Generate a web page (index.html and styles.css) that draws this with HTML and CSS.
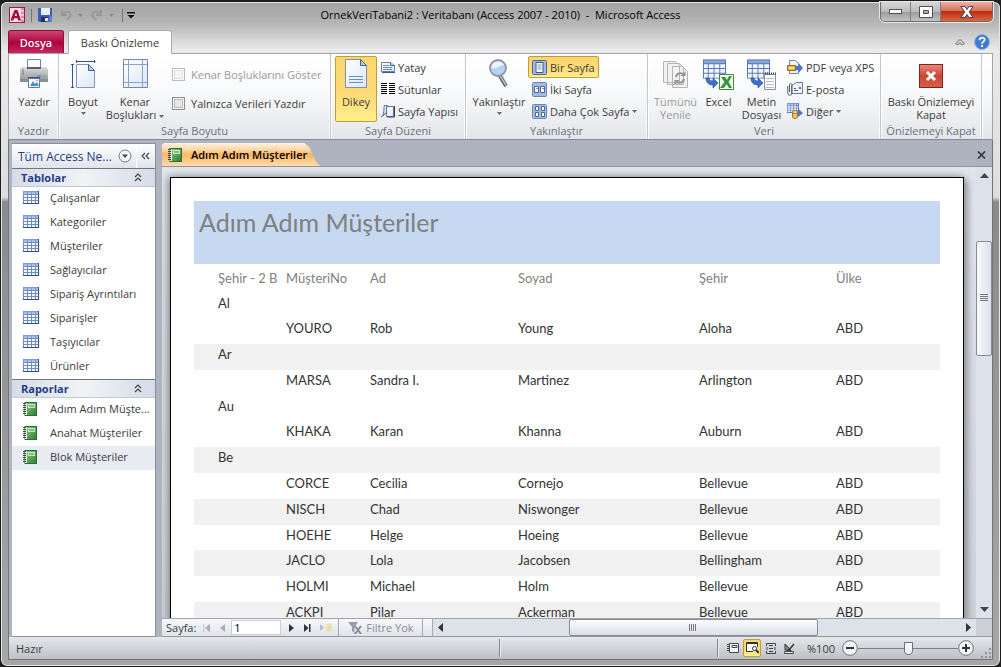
FILE: index.html
```html
<!DOCTYPE html>
<html lang="tr">
<head>
<meta charset="utf-8">
<title>OrnekVeriTabani2 : Veritabanı (Access 2007 - 2010) - Microsoft Access</title>
<link rel="stylesheet" href="styles.css">
</head>
<body>
<svg class="defs" aria-hidden="true">
  <defs>
    <linearGradient id="paper" x1="0" y1="0" x2="1" y2="1"><stop offset="0" stop-color="#fff"/><stop offset="1" stop-color="#dbe7f6"/></linearGradient>
    <linearGradient id="green" x1="0" y1="0" x2="1" y2="1"><stop offset="0" stop-color="#8fce87"/><stop offset="1" stop-color="#2c7c36"/></linearGradient>
    <linearGradient id="red" x1="0" y1="0" x2="0" y2="1"><stop offset="0" stop-color="#e88c7f"/><stop offset=".5" stop-color="#cc4434"/><stop offset="1" stop-color="#d5604c"/></linearGradient>
    <linearGradient id="grey" x1="0" y1="0" x2="0" y2="1"><stop offset="0" stop-color="#dcdcdc"/><stop offset="1" stop-color="#8d9094"/></linearGradient>
  </defs>
  <symbol id="table" viewBox="0 0 16 13">
    <rect width="16" height="13" fill="#6f8cc2"/><rect x="0" y="0" width="16" height="3" fill="#7f9dd2"/><path d="M0 12h16v1H0zM15 0h1v13h-1z" fill="#2f4f90"/>
    <path d="M1 1h3v2H1zM5 1h3v2H5zM9 1h3v2H9zM13 1h2v2h-2z" fill="#a9c0e8"/>
    <path d="M1 4h3v2H1zM5 4h3v2H5zM9 4h3v2H9zM13 4h2v2h-2zM1 7h3v2H1zM5 7h3v2H5zM9 7h3v2H9zM13 7h2v2h-2zM1 10h3v2H1zM5 10h3v2H5zM9 10h3v2H9zM13 10h2v2h-2z" fill="#f3f7fe"/>
  </symbol>
  <symbol id="report" viewBox="0 0 14 14">
    <rect x="2" y=".5" width="11.5" height="13" fill="url(#green)" stroke="#2d6c35"/><rect x="2" y="1" width="2" height="12" fill="#d9eed6"/>
    <path d="M0 1.500h3M0 3.500h3M0 5.500h3M0 7.500h3M0 9.500h3M0 11.500h3" stroke="#444"/>
    <rect x="5.500" y="2.500" width="6" height="3" fill="#7dc479" stroke="#c5e8c0"/>
  </symbol>
  <symbol id="grid" viewBox="0 0 24 20">
    <path d="M0 0h24v20H0z" fill="#5677b5"/><path d="M1 1h22v3H1z" fill="#88a5d8"/>
    <path d="M1 5h4v4H1zM6 5h5v4H6zM12 5h5v4h-5zM18 5h5v4h-5zM1 10h4v4H1zM6 10h5v4H6zM12 10h5v4h-5zM18 10h5v4h-5zM1 15h4v4H1zM6 15h5v4H6zM12 15h5v4h-5zM18 15h5v4h-5z" fill="#f3f7fd"/>
  </symbol>
  <symbol id="page" viewBox="0 0 22 29">
    <path d="M.5.500h15l6 6v22H.5z" fill="url(#paper)" stroke="#7b8fb4"/><path d="M15.500.500v6h6z" fill="#b8cdec" stroke="#40619c"/>
  </symbol>
  <symbol id="chev" viewBox="0 0 8 9"><path d="M1 4l3-3 3 3M1 8l3-3 3 3" fill="none" stroke="#444" stroke-width="1.200"/></symbol>
  <symbol id="down" viewBox="0 0 5 3"><path d="M0 0h5L2.500 3z" fill="currentColor"/></symbol>
</svg>

<div class="window">
  <header class="titlebar">
    <div class="quick">
      <svg class="logo" width="16" height="16" viewBox="0 0 16 16"><rect x=".5" y=".5" width="15" height="15" fill="#f9e3ea" stroke="#a8154d"/><path d="M12 1h3v14h-3z" fill="#e18ba9"/><path d="M12 4h3M12 8h3M12 12h3" stroke="#fff"/><path d="M1.500 13.500L5.500 3h3L12 13.500H9.300l-.7-2.300H5l-.8 2.300zM5.700 9h2.300L7 5.500z" fill="#a1053d"/></svg>
      <i class="vline"></i>
      <button class="bare" aria-label="Kaydet"><svg width="14" height="14" viewBox="0 0 14 14"><path d="M0 0h14v14H1L0 13z" fill="#4158b8"/><path d="M3 0h9v7H3z" fill="#e9effa"/><path d="M3 9h8v5H3z" fill="#23305f"/><path d="M7 10h3v3H7z" fill="#f4f4f4"/><path d="M12 7l2 2v5H8z" fill="#7f9be6" opacity=".5"/></svg></button>
      <button class="bare undo" aria-label="Geri Al" disabled><svg width="12" height="12" viewBox="0 0 12 12"><path d="M2 1v5h5M2 6C5 1 11 2 10.500 6.500 10 9 8 10 6.500 11" fill="none" stroke="#989898" stroke-width="2"/></svg></button>
      <svg class="dim" width="5" height="3"><use href="#down"/></svg>
      <button class="bare redo" aria-label="Yinele" disabled><svg width="12" height="12" viewBox="0 0 12 12"><path d="M10 1v5H5M10 6C7 1 1 2 1.500 6.500 2 9 4 10 5.500 11" fill="none" stroke="#989898" stroke-width="2"/></svg></button>
      <svg class="dim" width="5" height="3"><use href="#down"/></svg>
      <i class="vline last"></i>
      <button class="bare" aria-label="Hızlı Erişim"><svg width="8" height="7" viewBox="0 0 8 7"><path d="M0 0h8v1.500H0zM.5 3h7L4 6.500z" fill="#111"/></svg></button>
    </div>
    <h1>OrnekVeriTabani2 : Veritabanı (Access 2007 - 2010)&nbsp; - &nbsp;Microsoft Access</h1>
    <div class="winbtns">
      <button aria-label="Simge durumu"><svg width="14" height="6" viewBox="0 0 14 6"><rect x=".5" y=".5" width="12" height="4" fill="#fff" stroke="#4c5058"/></svg></button>
      <button aria-label="Ekranı kapla"><svg width="14" height="12" viewBox="0 0 14 12"><path fill-rule="evenodd" d="M.5.500h13v11H.5zM4.500 4.500v3h5v-3z" fill="#fff" stroke="#4c5058"/></svg></button>
      <button class="close" aria-label="Kapat"><svg width="14" height="12" viewBox="0 0 14 12"><path d="M1 .5h4l2 3 2-3h4L9.300 6l3.700 5.500H9l-2-3-2 3H1L4.700 6z" fill="#fff" stroke="#4c3a44"/></svg></button>
    </div>
  </header>

  <nav class="tabs">
    <button class="file">Dosya</button>
    <button class="tab">Baskı Önizleme</button>
    <button class="bare collapse" aria-label="Şeridi Simge Durumuna Küçült"><svg width="10" height="8" viewBox="0 0 10 8"><path d="M1 5.500L5 1.500l4 4L7.500 7 5 4.500 2.500 7z" fill="#fff" stroke="#3c3c3c"/></svg></button>
    <button class="bare" aria-label="Yardım"><svg width="16" height="16" viewBox="0 0 16 16"><circle cx="8" cy="8" r="7.500" fill="#3d7bd0" stroke="#8db5e8"/><path d="M5.500 6.200c0-3.600 5.200-3.300 5.200-.4C10.700 7.600 8 7.700 8 9.800" fill="none" stroke="#fff" stroke-width="1.800"/><path d="M7 11h2v2H7z" fill="#fff"/></svg></button>
  </nav>

  <section class="ribbon">
    <div class="group g-print">
      <div class="tools">
        <button class="big"><svg width="28" height="30" viewBox="0 0 28 30"><path d="M7.500.500h13v10h-13z" fill="#f8fbff" stroke="#6f83a6"/><path d="M2 8h24l2 2v12l-1 1H1l-1-1V10z" fill="url(#grey)"/><path d="M0 20h28v3H0z" fill="#8b8f94"/><path d="M7 8h14v2H7z" fill="#5b5f66"/><path d="M2 11h2M2 13h2M2 15h2" stroke="#777"/><path d="M8 18h12v2H8z" fill="#4e535b"/><path d="M8.500 19.500h11v9h-11z" fill="#fff" stroke="#5577b5"/><path d="M10 27l3-5 2 3 2-2 2 4z" fill="#4f8bd3"/><circle cx="17" cy="21.500" r="1" fill="#e5a13c"/><path d="M17 17h4" stroke="#4a78cf"/><path d="M22 17h3" stroke="#5dc04e"/></svg><span>Yazdır</span></button>
      </div><h2>Yazdır</h2>
    </div>
    <div class="group g-size">
      <div class="tools">
        <button class="big"><svg width="25" height="30" viewBox="0 0 25 30"><path d="M5.500 2.500h19M5.500 1v3M23.500 1v3M1.500 5.500v23M0 5.500h3M0 28.500h3" stroke="#31519c" fill="none"/><path d="M5.500 5.500h12l6 6v17h-18z" fill="url(#paper)" stroke="#8497b9"/><path d="M17.500 5.500v6h6z" fill="#b8cdec" stroke="#40619c"/></svg><span>Boyut</span><svg class="drop" width="5" height="3"><use href="#down"/></svg></button>
        <button class="big wide"><svg width="25" height="30" viewBox="0 0 25 30"><path d="M.5.500h24v28H.5z" fill="url(#paper)" stroke="#7088b3"/><path d="M5.500 1v27M19.500 1v27M1 5.500h23M1 23.500h23" stroke="#8aa3cd"/></svg><span>Kenar<br>Boşlukları <svg width="5" height="3"><use href="#down"/></svg></span></button>
        <div class="checks">
          <label class="off"><input type="checkbox" disabled>Kenar Boşluklarını Göster</label>
          <label><input type="checkbox">Yalnızca Verileri Yazdır</label>
        </div>
      </div><h2>Sayfa Boyutu</h2>
    </div>
    <div class="group g-layout">
      <div class="tools">
        <button class="big on"><svg width="22" height="30" viewBox="0 0 22 30"><use href="#page" width="22" height="29"/><path d="M4 17.500h14M4 20.500h14M4 23.500h14" stroke="#6d8cc0"/></svg><span>Dikey</span></button>
        <div class="smalls">
          <button class="small"><svg width="14" height="14" viewBox="0 0 14 14"><path d="M.5 2.500h9l4 3v6H.5z" fill="url(#paper)" stroke="#6580b0"/><path d="M9.500 2.500v3h4" fill="#b8cdec" stroke="#40619c"/><path d="M2 5.500h6M2 7.500h9M2 9.500h9" stroke="#6d8cc0"/><path d="M1 12.500h13" stroke="#3d5688"/></svg>Yatay</button>
          <button class="small"><svg width="14" height="14" viewBox="0 0 14 14"><path d="M0 1.500h6M0 3.500h6M0 5.500h6M0 7.500h6M0 9.500h6M0 11.500h6M8 1.500h6M8 3.500h6M8 5.500h6M8 7.500h6M8 9.500h6M8 11.500h6" stroke="#000"/></svg>Sütunlar</button>
          <button class="small"><svg width="14" height="14" viewBox="0 0 14 14"><path d="M1.500 12c2-3 1-9 2-10.500h3V9" fill="#dfe5ee" stroke="#5f6d86"/><path d="M5.500 2.500h7v10h-7z" fill="url(#paper)" stroke="#5d76a8"/><path d="M13.500 2v11H6" stroke="#33415f" fill="none"/><path d="M0 13l5-4" stroke="#555"/></svg>Sayfa Yapısı</button>
        </div>
      </div><h2>Sayfa Düzeni</h2>
    </div>
    <div class="group g-zoom">
      <div class="tools">
        <button class="big wide"><svg width="22" height="30" viewBox="0 0 22 30"><path d="M12 17l6 10" stroke="#62666e" stroke-width="4"/><path d="M12 17l6 9" stroke="#b9bdc4" stroke-width="1.500"/><circle cx="10" cy="9" r="8" fill="#b5d2f2" stroke="#8d949f" stroke-width="1.800"/><path d="M3 9a7 7 0 0 1 13-3C12 6 9 11 3 9z" fill="#eaf4ff"/></svg><span>Yakınlaştır</span><svg class="drop" width="5" height="3"><use href="#down"/></svg></button>
        <div class="smalls">
          <button class="small on"><svg width="15" height="15" viewBox="0 0 15 15"><rect x=".5" y=".5" width="14" height="14" rx="1" fill="#a3bbdf" stroke="#4b6695"/><path d="M4 2.500h7v10H4z" fill="#fff" stroke="#3d5688"/><path d="M5.500 5h4M5.500 7h4M5.500 9h4" stroke="#7890b8"/></svg>Bir Sayfa</button>
          <button class="small"><svg width="15" height="15" viewBox="0 0 15 15"><rect x=".5" y=".5" width="14" height="14" rx="1" fill="#a3bbdf" stroke="#6a86b5"/><path d="M2.500 4.500h4v6h-4zM8.500 4.500h4v6h-4z" fill="#fff" stroke="#4b6695"/><path d="M4 6.500h2M10 6.500h2" stroke="#7890b8"/></svg>İki Sayfa</button>
          <button class="small"><svg width="15" height="15" viewBox="0 0 15 15"><rect x=".5" y=".5" width="14" height="14" rx="1" fill="#a3bbdf" stroke="#6a86b5"/><path d="M3.500 2.500h3v4h-3zM9.500 2.500h3v4h-3zM3.500 8.500h3v4h-3zM9.500 8.500h3v4h-3z" fill="#fff" stroke="#4b6695"/></svg>Daha Çok Sayfa <svg width="5" height="3"><use href="#down"/></svg></button>
        </div>
      </div><h2>Yakınlaştır</h2>
    </div>
    <div class="group g-data">
      <div class="tools">
        <button class="big off" disabled><svg width="26" height="30" viewBox="0 0 26 30"><path d="M.5 2.500h12l4 4v17H.5zM4.500 4.500h12l4 4v17h-16zM9.500 7.500h10l5 5v16h-15z" fill="#f2f2f2" stroke="#b4b4b4"/><path d="M13 18a4.500 4.500 0 0 1 8-2M21 20a4.500 4.500 0 0 1-8 2" fill="none" stroke="#949494" stroke-width="2"/><path d="M22.500 12v5h-5zM11.500 26v-5h5z" fill="#949494"/></svg><span>Tümünü<br>Yenile</span></button>
        <button class="big"><svg width="32" height="32" viewBox="0 0 32 32"><use href="#grid" width="23" height="20"/><path d="M3 19c0 6 4 7 7 7v3l5-5-5-5v3c-2 0-4-1-4-3z" fill="#3f6fd0" stroke="#284c9c" stroke-width=".6"/><path d="M16.500 15.500h14v15h-14z" fill="#f2fbef" stroke="#3d8b40"/><path d="M18 18h4l2 3 2-4h3l-3.500 6 3.500 6h-3l-2.500-4-2.500 4h-4l4.500-6z" fill="#35913a"/></svg><span>Excel</span></button>
        <button class="big"><svg width="30" height="32" viewBox="0 0 30 32"><use href="#grid" width="23" height="20"/><path d="M4 19c0 6 4 7 7 7v3l5-5-5-5v3c-2 0-4-1-4-3z" fill="#3f6fd0" stroke="#284c9c" stroke-width=".6"/><path d="M17.500 15.500h11v15h-11z" fill="#fff" stroke="#8a8f99"/><path d="M18 14.500h11" stroke="#444" stroke-dasharray="1 1" stroke-width="2"/><path d="M19 19.500h8M19 22.500h8M19 25.500h8M19 28.500h8" stroke="#b3bac8"/></svg><span>Metin<br>Dosyası</span></button>
        <div class="smalls">
          <button class="small"><svg width="16" height="16" viewBox="0 0 16 16"><path d="M2.500 1.500h6l3 3v10h-9z" fill="url(#paper)" stroke="#6f83a6"/><path d="M.5 6.500h8v5h-8z" fill="#e9b93f" stroke="#9b6b12"/><path d="M2 9h5" stroke="#fff"/><path d="M9 7h3V4.500L16 9l-4 4.500V11H9z" fill="#4577d2"/></svg>PDF veya XPS</button>
          <button class="small"><svg width="16" height="16" viewBox="0 0 16 16"><path d="M4.500 4.500l5-3h6v11h-11z" fill="#edf3fb" stroke="#66799e"/><path d="M7 9.500h4M7 7.500h2" stroke="#3d5fa5"/><path d="M12 6h2v2h-2z" fill="#d04a35"/><path d="M.8 5v7c0 3 4.200 3 4.200 0V4c0-2-2.500-2-2.500 0v7" fill="none" stroke="#555c69"/></svg>E-posta</button>
          <button class="small"><svg width="16" height="16" viewBox="0 0 16 16"><use href="#table" width="12" height="10"/><path d="M8 8h3V5.500l5 4.500-5 4V12H8z" fill="#4577d2"/><path d="M5.500 9v5c0 2 5 2 5 0V9z" fill="#eec15f" stroke="#a97523"/><ellipse cx="8" cy="9" rx="2.500" ry="1.500" fill="#fbe3a8" stroke="#a97523"/></svg>Diğer <svg width="5" height="3"><use href="#down"/></svg></button>
        </div>
      </div><h2>Veri</h2>
    </div>
    <div class="group g-close">
      <div class="tools">
        <button class="big wide"><svg width="24" height="30" viewBox="0 0 24 30"><rect x=".5" y="5.500" width="23" height="23" fill="url(#red)" stroke="#7e2419"/><path d="M8 13l8 8M16 13l-8 8" stroke="#fff" stroke-width="3"/></svg><span>Baskı Önizlemeyi<br>Kapat</span></button>
      </div><h2>Önizlemeyi Kapat</h2>
    </div>
  </section>

  <main class="work">
    <aside class="side">
      <div class="side-head"><span>Tüm Access Ne...</span>
        <button class="bare" aria-label="Gezinti seçenekleri"><svg width="14" height="14" viewBox="0 0 14 14"><circle cx="7" cy="7" r="6" fill="#f4f5f7" stroke="#777c86"/><path d="M4 5.500h6L7 9z" fill="#444"/></svg></button>
        <i></i>
        <button class="bare fold" aria-label="Gezinti bölmesini kapat"><svg width="9" height="8" viewBox="0 0 9 8"><path d="M4 1L1 4l3 3M8 1L5 4l3 3" fill="none" stroke="#444" stroke-width="1.200"/></svg></button>
      </div>
      <h3>Tablolar<svg width="8" height="9"><use href="#chev"/></svg></h3>
      <ul>
        <li><a href="#t1"><svg width="16" height="13"><use href="#table"/></svg>Çalışanlar</a></li>
        <li><a href="#t2"><svg width="16" height="13"><use href="#table"/></svg>Kategoriler</a></li>
        <li><a href="#t3"><svg width="16" height="13"><use href="#table"/></svg>Müşteriler</a></li>
        <li><a href="#t4"><svg width="16" height="13"><use href="#table"/></svg>Sağlayıcılar</a></li>
        <li><a href="#t5"><svg width="16" height="13"><use href="#table"/></svg>Sipariş Ayrıntıları</a></li>
        <li><a href="#t6"><svg width="16" height="13"><use href="#table"/></svg>Siparişler</a></li>
        <li><a href="#t7"><svg width="16" height="13"><use href="#table"/></svg>Taşıyıcılar</a></li>
        <li><a href="#t8"><svg width="16" height="13"><use href="#table"/></svg>Ürünler</a></li>
      </ul>
      <h3>Raporlar<svg width="8" height="9"><use href="#chev"/></svg></h3>
      <ul>
        <li><a href="#r1"><svg width="16" height="14"><use href="#report" width="14"/></svg>Adım Adım Müşte...</a></li>
        <li><a href="#r2"><svg width="16" height="14"><use href="#report" width="14"/></svg>Anahat Müşteriler</a></li>
        <li><a href="#r3" class="hot"><svg width="16" height="14"><use href="#report" width="14"/></svg>Blok Müşteriler</a></li>
      </ul>
    </aside>

    <section class="doc">
      <div class="doc-tabs">
        <button class="doc-tab"><svg width="14" height="14"><use href="#report"/></svg>Adım Adım Müşteriler</button>
        <button class="bare doc-close" aria-label="Kapat"><svg width="9" height="8" viewBox="0 0 9 8"><path d="M1 .5l7 7M8 .5l-7 7" stroke="#333" stroke-width="1.600"/></svg></button>
      </div>
      <div class="view">
        <div class="canvas">
          <article class="sheet">
            <h2>Adım Adım Müşteriler</h2>
            <table>
              <colgroup><col class="c0"><col class="c1"><col class="c2"><col class="c3"><col class="c4"><col class="c5"></colgroup>
              <thead><tr><th>Şehir - 2 B</th><th>MüşteriNo</th><th>Ad</th><th>Soyad</th><th>Şehir</th><th>Ülke</th></tr></thead>
              <tbody>
                <tr class="lead"><td colspan="6">Al</td></tr>
                <tr><td></td><td>YOURO</td><td>Rob</td><td>Young</td><td>Aloha</td><td>ABD</td></tr>
                <tr class="band"><td colspan="6">Ar</td></tr>
                <tr><td></td><td>MARSA</td><td>Sandra I.</td><td>Martinez</td><td>Arlington</td><td>ABD</td></tr>
                <tr class="lead"><td colspan="6">Au</td></tr>
                <tr><td></td><td>KHAKA</td><td>Karan</td><td>Khanna</td><td>Auburn</td><td>ABD</td></tr>
                <tr class="band"><td colspan="6">Be</td></tr>
                <tr><td></td><td>CORCE</td><td>Cecilia</td><td>Cornejo</td><td>Bellevue</td><td>ABD</td></tr>
                <tr class="band"><td></td><td>NISCH</td><td>Chad</td><td>Niswonger</td><td>Bellevue</td><td>ABD</td></tr>
                <tr class="lead"><td></td><td>HOEHE</td><td>Helge</td><td>Hoeing</td><td>Bellevue</td><td>ABD</td></tr>
                <tr class="band"><td></td><td>JACLO</td><td>Lola</td><td>Jacobsen</td><td>Bellingham</td><td>ABD</td></tr>
                <tr><td></td><td>HOLMI</td><td>Michael</td><td>Holm</td><td>Bellevue</td><td>ABD</td></tr>
                <tr class="band"><td></td><td>ACKPI</td><td>Pilar</td><td>Ackerman</td><td>Bellevue</td><td>ABD</td></tr>
              </tbody>
            </table>
          </article>
        </div>
        <div class="vbar">
          <button class="bare" aria-label="Yukarı"><svg width="9" height="5" viewBox="0 0 9 5"><path d="M0 5l4.500-5L9 5z" fill="#444"/></svg></button>
          <div class="vtrack"><div class="vthumb"><svg width="8" height="8" viewBox="0 0 8 8"><path d="M0 .5h8M0 2.500h8M0 4.500h8M0 6.500h8" stroke="#777"/></svg></div></div>
          <button class="bare" aria-label="Aşağı"><svg width="9" height="5" viewBox="0 0 9 5"><path d="M0 0l4.500 5L9 0z" fill="#444"/></svg></button>
        </div>
      </div>
      <div class="pager">
        <label for="pg">Sayfa:</label>
        <button class="bare" aria-label="İlk" disabled><svg width="7" height="8" viewBox="0 0 7 8"><path d="M.7 0v8M7 0v8L2.500 4z" fill="#a9adb4" stroke="#a9adb4" stroke-width=".6"/></svg></button>
        <button class="bare" aria-label="Önceki" disabled><svg width="5" height="8" viewBox="0 0 5 8"><path d="M5 0v8L0 4z" fill="#a9adb4"/></svg></button>
        <input id="pg" type="text" value="1">
        <button class="bare" aria-label="Sonraki"><svg width="5" height="8" viewBox="0 0 5 8"><path d="M0 0v8l5-4z" fill="#333"/></svg></button>
        <button class="bare" aria-label="Son"><svg width="7" height="8" viewBox="0 0 7 8"><path d="M0 0v8l4.500-4zM5 0h1.500v8H5z" fill="#333"/></svg></button>
        <button class="bare new" aria-label="Yeni" disabled><svg width="13" height="9" viewBox="0 0 13 9"><path d="M0 1v7l4-3.500z" fill="#b9bcc2"/><path d="M9 0v9M5 4.500h8M6 1l6 7M12 1L6 8" stroke="#eadf9c" stroke-width="1.200"/></svg></button>
        <button class="filter" disabled><svg width="14" height="12" viewBox="0 0 14 12"><path d="M0 0h10L6.500 5v6L4 9V5z" fill="#9a9da3"/><path d="M7 4l6 8M13 4l-6 8" stroke="#85888e" stroke-width="1.800"/></svg>Filtre Yok</button>
        <span class="gap"></span>
        <div class="hbar">
          <button class="bare" aria-label="Sola"><svg width="5" height="9" viewBox="0 0 5 9"><path d="M5 0v9L0 4.500z" fill="#333"/></svg></button>
          <div class="htrack"><div class="hthumb"><svg width="8" height="7" viewBox="0 0 8 7"><path d="M.5 0v7M2.500 0v7M4.500 0v7M6.500 0v7" stroke="#777"/></svg></div></div>
          <button class="bare" aria-label="Sağa"><svg width="5" height="9" viewBox="0 0 5 9"><path d="M0 0v9l5-4.500z" fill="#333"/></svg></button>
        </div>
        <span class="corner"></span>
      </div>
    </section>
  </main>

  <footer class="status">
    <span class="ready">Hazır</span><i class="vsep"></i>
    <span class="fill"></span><i class="vsep"></i>
    <div class="modes">
      <button class="mode" aria-label="Rapor Görünümü"><svg width="12" height="10" viewBox="0 0 12 10"><path d="M2.500.500h9v9h-9z" fill="#f5f5f5" stroke="#444"/><path d="M0 1.500h3M0 3.500h3M0 5.500h3M0 7.500h3" stroke="#444"/><path d="M5 2.500h5v2H5z" fill="#fff" stroke="#444"/></svg></button>
      <button class="mode on" aria-label="Baskı Önizleme"><svg width="13" height="12" viewBox="0 0 13 12"><path d="M7 9.500H.5v-9h11V5" fill="#fff" stroke="#333"/><path d="M1 1.500h10" stroke="#333"/><circle cx="8.500" cy="6.500" r="2" fill="#fff" stroke="#333"/><path d="M10 8l3 3" stroke="#333" stroke-width="2"/></svg></button>
      <button class="mode" aria-label="Düzen Görünümü"><svg width="10" height="11" viewBox="0 0 10 11"><path d="M.5 3V.500h9V3M.5 8v2.500h9V8M1 4v3M9 4v3" fill="none" stroke="#444"/><path d="M3 2.500h4M3 5.500h4M3 8.500h4" stroke="#444"/></svg></button>
      <button class="mode" aria-label="Tasarım Görünümü"><svg width="12" height="11" viewBox="0 0 12 11"><path d="M1 1v6l6 .5z" fill="#888" stroke="#333"/><path d="M4 8L10 1" stroke="#333" stroke-width="1.500"/><path d="M.5 8.500h9v2h-9z" fill="#fff" stroke="#444"/></svg></button>
    </div>
    <output>%100</output>
    <button class="bare" aria-label="Uzaklaştır"><svg width="16" height="16" viewBox="0 0 16 16"><circle cx="8" cy="8" r="7.300" fill="#f6f7f8" stroke="#6c7079"/><path d="M4 8h8" stroke="#333" stroke-width="2"/></svg></button>
    <input class="zoom" type="range" aria-label="Yakınlaştırma" min="0" max="100" value="50">
    <button class="bare" aria-label="Yakınlaştır"><svg width="16" height="16" viewBox="0 0 16 16"><circle cx="8" cy="8" r="7.300" fill="#f6f7f8" stroke="#6c7079"/><path d="M4 8h8M8 4v8" stroke="#333" stroke-width="2"/></svg></button>
    <svg class="grip" width="12" height="12" viewBox="0 0 12 12"><path d="M9 1h2v2H9zM5 5h2v2H5zM9 5h2v2H9zM1 9h2v2H1zM5 9h2v2H5zM9 9h2v2H9z" fill="#8e939b"/></svg>
  </footer>
</div>
</body>
</html>
```

FILE: styles.css
```css
* { box-sizing: border-box; }
html, body { height: 100%; margin: 0; }
body {
  background: #222;
  font: 11px/13px "Open Sans", "Noto Sans", sans-serif;
  color: #3b3b3b;
  overflow: hidden;
}
h1, h2, h3, ul { margin: 0; padding: 0; font-weight: normal; list-style: none; }
button, input { font: inherit; color: inherit; margin: 0; padding: 0; }
button { background: none; border: 1px solid transparent; white-space: nowrap; }
svg { flex: none; }
.defs { position: absolute; width: 0; height: 0; }
.bare { border: 0; display: flex; align-items: center; justify-content: center; }

.window {
  height: 100%;
  display: flex;
  flex-direction: column;
  padding: 0 7px 6px;
  border: 1px solid #1c1c1c;
  border-top-width: 2px;
  border-radius: 7px;
  box-shadow: inset 0 0 0 1px #e6e6e6;
  background: linear-gradient(#a2a2a2, #b4b4b4 20px, #eaeaea 48px, #dcdcdc 195px, #8b8b8b 200px, #a7a7a7);
}

/* title bar */
.titlebar { flex: none; height: 28px; display: flex; }
.quick { display: flex; align-items: center; gap: 8px; height: 26px; padding-left: 1px; }
.vline { width: 1px; height: 13px; background: #777; margin: 0 -2px; }
.vline.last { margin: 0 -4px 0 0; }
.undo, .redo { margin-right: -2px; }
.dim { color: #888; }
h1 {
  flex: 1;
  text-align: center;
  font-size: 11px;
  line-height: 26px;
  color: #000;
  padding-right: 14px;
}
.winbtns {
  display: flex;
  height: 20px;
  border: 1px solid #6b6b6b;
  border-top: 0;
  border-radius: 0 0 5px 5px;
  overflow: hidden;
  box-shadow: 0 0 0 1px #e8e8e8;
}
.winbtns button {
  width: 30px;
  display: flex;
  align-items: center;
  justify-content: center;
  border: 0;
  border-right: 1px solid #808080;
  background: linear-gradient(#d6d6d6, #bcbcbc 50%, #9a9a9a 51%, #c2c2c2);
}
.winbtns .close { width: 51px; border: 0; background: linear-gradient(#eab2a5, #d9735e 45%, #bd2f12 50%, #d9653f); }

/* ribbon tabs */
.tabs { flex: none; display: flex; height: 23px; align-items: flex-end; padding-right: 3px; gap: 8px; }
.file {
  width: 56px;
  height: 23px;
  color: #fff;
  font-weight: 600;
  border: 1px solid #8f0c3c;
  border-bottom: 0;
  border-radius: 3px 3px 0 0;
  background: linear-gradient(#c94674, #b20e48 45%, #a8003c 50%, #c9265e);
}
.tab {
  width: 104px;
  height: 24px;
  margin: 0 auto -1px -4px;
  position: relative;
  background: #fff;
  border: 1px solid #a9adb3;
  border-bottom: 0;
  border-radius: 3px 3px 0 0;
}
.tabs .bare { height: 23px; }
.collapse { margin-right: 1px; }

/* ribbon */
.ribbon {
  flex: none;
  display: flex;
  border: 1px solid #a0a5ac;
  border-bottom-color: #85898f;
  background: linear-gradient(#fff, #f8f9fa 45%, #e3e6ea);
}
.group {
  display: flex;
  flex-direction: column;
  padding-top: 2px;
  border-right: 1px solid #c4c8cd;
  box-shadow: inset -1px 0 #f9fafb, 1px 0 #fff;
}
.g-print { width: 50px; }
.g-size { width: 272px; }
.g-layout { width: 135px; }
.g-zoom { width: 182px; }
.g-data { width: 233px; }
.g-close { width: 101px; }
.tools { display: flex; height: 66px; padding: 0 4px; }
.g-size .tools { padding-left: 3px; }
.g-close .tools { justify-content: center; }
.group h2 { font-size: 11px; line-height: 17px; text-align: center; color: #6a6f7a; }
.big {
  min-width: 42px;
  display: flex;
  flex-direction: column;
  align-items: center;
  padding-top: 2px;
  border-radius: 2px;
}
.big > svg:first-child { margin-bottom: 6px; }
.big > svg[height="32"] { margin-bottom: 4px; }
.big .drop { margin-top: 4px; }
.ribbon svg[width="5"] { color: #666; vertical-align: middle; }
.wide { min-width: 62px; }
.off { color: #9a9a9a; }
.on { border-color: #c59a3c; border-radius: 2px; background: linear-gradient(#fbd66b, #ffdb79 60%, #fff08c); }
.smalls { display: flex; flex-direction: column; align-items: flex-start; }
.small { height: 22px; display: flex; align-items: center; gap: 3px; padding: 0 3px; border-radius: 2px; }
.g-zoom .wide { min-width: 58px; }
.g-data .tools { padding-left: 6px; }
.g-data .big { min-width: 43px; }
.checks { display: flex; flex-direction: column; padding: 4px 0 0 6px; }
.checks label { display: flex; align-items: center; gap: 6px; height: 29px; white-space: nowrap; }
.checks input {
  appearance: none;
  width: 13px;
  height: 13px;
  border: 1px solid #8e8f8f;
  background: #e4e6e8;
  box-shadow: inset 0 0 0 1px #f4f4f4, inset 0 0 0 2px #b9bcc0;
}
.checks input:disabled { border-color: #b9bbbd; background: #f4f4f4; box-shadow: inset 0 0 0 1px #fff, inset 0 0 0 2px #ddd; }

/* work area */
.work { flex: 1; min-height: 0; display: flex; gap: 6px; padding: 3px 0 0 3px; border: 1px solid #6f747b; border-width: 0 1px; background: #adb4c0; }
.side { width: 144px; flex: none; background: #fff; border: 1px solid #8a909b; border-left: 0; }
.side-head {
  height: 25px;
  display: flex;
  align-items: center;
  gap: 2px;
  padding: 0 5px 0 6px;
  font-size: 12px;
  white-space: nowrap;
  color: #1f3d87;
  background: linear-gradient(#fff, #e0e4ea);
  border-bottom: 1px solid #70757d;
}
.side-head span { flex: 1; }
.side-head i { width: 1px; height: 24px; background: #fff; margin: 0 2px; }
h3 {
  height: 18px;
  display: flex;
  align-items: center;
  justify-content: space-between;
  padding: 0 13px 0 9px;
  font-size: 11px;
  font-weight: bold;
  color: #1f3d87;
  background: linear-gradient(90deg, #d5dbe8, #f1f3f5 50%, #d5dbe8);
  border-bottom: 1px solid #c3c9d2;
}
ul + h3 { height: 19px; border-top: 1px solid #70757d; }
.side a { display: flex; align-items: center; gap: 11px; height: 24px; padding: 0 0 3px 11px; color: inherit; text-decoration: none; white-space: nowrap; }
.side a.hot { background: #e8ebf1; }

.doc { flex: 1; min-width: 0; display: flex; flex-direction: column; }
.doc-tabs { flex: none; height: 24px; display: flex; justify-content: space-between; border-bottom: 1px solid #8d939d; padding-right: 6px; }
.doc-tab {
  display: flex;
  align-items: center;
  gap: 9px;
  height: 23px;
  padding: 0 13px 0 6px;
  font-weight: 600;
  color: #000;
  border: 0;
  border-radius: 3px 0 0 0;
  background: linear-gradient(#fff2e2, #fcd6a4 30%, #fcb660 50%, #fedcae);
  clip-path: polygon(0 0, calc(100% - 16px) 0, calc(100% - 11px) 4px, calc(100% - 4px) 19px, 100% 100%, 0 100%);
}
.view { flex: 1; min-height: 0; display: flex; background: #dfe3e9; }
.canvas { flex: 1; min-width: 0; padding: 10px 12px 0 8px; overflow: hidden; background: linear-gradient(#e2e6ec, #d0d4da); }
.sheet {
  min-height: 120%;
  padding: 23px;
  border: 1px solid #000;
  background: #fff;
  box-shadow: 3px 3px 8px #8a8e95, -2px 0 8px #8a8e95;
  font-family: Lato, sans-serif;
}
.sheet h2 { height: 63px; padding-left: 5px; margin-bottom: 4px; font-size: 25px; line-height: 42px; color: #7f7f7f; background: #c6d9f1; }
table { width: 100%; table-layout: fixed; border-collapse: collapse; font-size: 13px; line-height: 12px; }
.c0 { width: 92px; }
.c1 { width: 84px; }
.c2 { width: 148px; }
.c3 { width: 181px; }
.c4 { width: 137px; }
th, td { padding: 4px 0 0; height: 26px; text-align: left; vertical-align: top; font-weight: normal; white-space: nowrap; color: #333; }
th:first-child, td:first-child { padding-left: 24px; }
th { height: 25px; color: #7f7f7f; }
.lead td { height: 25px; }
.band { background: #f1f1f1; }

.vbar { width: 16px; display: flex; flex-direction: column; background: #dde2ea; }
.vbar .bare { height: 17px; }
.vtrack { flex: 1; display: flex; flex-direction: column; }
.vtrack::before { content: ""; flex: 57; }
.vtrack::after { content: ""; flex: 246; }
.vthumb { flex: 114; display: flex; align-items: center; justify-content: center; border: 1px solid #858c98; border-radius: 2px; background: linear-gradient(90deg, #fafbfc, #dbe0e8); }

.pager { flex: none; height: 19px; display: flex; align-items: stretch; border-top: 1px solid #9fa4ae; border-bottom: 1px solid #9196a0; background: linear-gradient(#f7f8fa, #dfe3e9); }
.pager label { line-height: 17px; padding: 0 2px 0 4px; }
.pager .bare { padding: 0 5px; }
.pager input { width: 50px; margin: 1px 3px 1px 1px; padding: 0 2px; border: 1px solid #c9cdd4; background: #fff; color: #000; }
.pager .new { padding: 0 5px 0 4px; }
.filter { display: flex; align-items: center; gap: 4px; padding: 0 8px 0 9px; color: #8a8d93; border: 1px solid #a4a9b2; border-width: 0 1px; }
.gap { width: 10px; border-right: 1px solid #a4a9b2; }
.hbar { flex: 1; display: flex; background: #dde2ea; }
.htrack { flex: 1; display: flex; }
.htrack::before { content: ""; flex: 122; }
.htrack::after { content: ""; flex: 144; }
.hthumb { flex: 248; display: flex; align-items: center; justify-content: center; border: 1px solid #858c98; border-radius: 2px; background: linear-gradient(#fafbfc, #dbe0e8); }
.corner { width: 16px; background: #ccd0d6; }

/* status bar */
.status { flex: none; height: 23px; display: flex; align-items: center; padding-left: 7px; border: 1px solid #6f747b; border-top: 0; background: linear-gradient(#e6e8ea, #bcc0c6); }
.ready { flex: 484; }
.fill { flex: 216; }
.vsep { width: 2px; height: 18px; border-left: 1px solid #82878f; border-right: 1px solid #eee; }
.modes { display: flex; gap: 1px; padding: 0 8px 0 5px; }
.mode { width: 18px; height: 18px; display: flex; align-items: center; justify-content: center; }
.status output { width: 35px; }
.zoom { appearance: none; width: 100px; height: 16px; background: linear-gradient(#7b8089, #7b8089) center / 100% 1px no-repeat; }
.zoom::-webkit-slider-thumb { appearance: none; width: 9px; height: 13px; background: #f6f7f8; border: 1px solid #6c7079; border-radius: 1px 1px 5px 5px; }
.grip { align-self: flex-end; margin-left: 6px; }
```
